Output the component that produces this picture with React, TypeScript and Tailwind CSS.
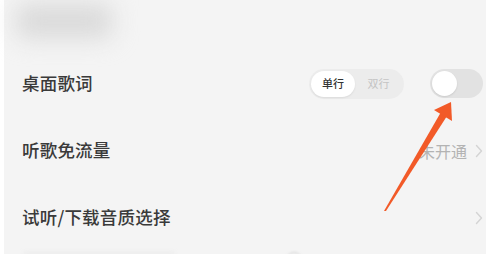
import React from "react";

const font = { fontFamily: '"Noto Sans CJK SC", "Noto Sans", sans-serif' };

const Chevron = () => (
  <svg width="8" height="14" viewBox="0 0 8 14" fill="none">
    <path d="M1.5 1.5 L6.5 7 L1.5 12.5" stroke="#d4d4d4" strokeWidth="1.4" strokeLinecap="round" strokeLinejoin="round" />
  </svg>
);

const Row: React.FC<{ title: string; children?: React.ReactNode }> = ({ title, children }) => (
  <div className="h-[67px] flex items-center justify-between pl-[18px] pr-[3px]">
    <span className="text-[17.5px] font-medium text-[#3a3a3a] tracking-[0.2px]">{title}</span>
    <div className="flex items-center">{children}</div>
  </div>
);

export default function App() {
  return (
    <div className="relative w-[486px] h-[254px] overflow-hidden bg-[#f4f4f4] flex" style={font}>
      <div className="w-[4px] h-full bg-white" />
      <div className="flex-1 flex flex-col">
        <div className="h-[50px] flex items-start pl-[12px] pt-[4px]">
          <div className="w-[96px] h-[34px] rounded-lg bg-[#d9d9d9] blur-[12px]" />
        </div>
        <Row title="桌面歌词">
          <div className="w-[95px] h-[30px] rounded-full bg-[#ececec] flex items-center p-[2px]">
            <div className="w-[44px] h-[26px] rounded-full bg-white shadow-[0_1px_2px_rgba(0,0,0,0.08)] flex items-center justify-center text-[11px] font-medium text-[#333]">
              单行
            </div>
            <div className="flex-1 flex items-center justify-center text-[11px] text-[#c4c4c4]">双行</div>
          </div>
          <div className="ml-[26px] w-[53px] h-[29px] rounded-full bg-[#e2e2e2] flex items-center p-[2px]">
            <div className="w-[25px] h-[25px] rounded-full bg-white shadow-[0_1px_2px_rgba(0,0,0,0.1)]" />
          </div>
        </Row>
        <Row title="听歌免流量">
          <span className="text-[16px] text-[#b3b3b3] mr-[8px]">未开通</span>
          <Chevron />
        </Row>
        <Row title="试听/下载音质选择">
          <Chevron />
        </Row>
        <div className="flex items-start h-[3px] pt-[1px]">
          <div className="ml-[20px] w-[150px] h-[4px] bg-[#ebebeb] blur-[2px]" />
          <div className="ml-[112px] w-[16px] h-[16px] rounded-full border border-[#d0d0d0] blur-[1px]" />
        </div>
      </div>
      <svg className="absolute left-0 top-0" width="486" height="254" viewBox="0 0 486 254">
        <polygon points="384,211 386,211 447,116 441,112" fill="#f25a28" />
        <polygon points="451,102 434,110 452,121" fill="#f25a28" />
      </svg>
    </div>
  );
}
